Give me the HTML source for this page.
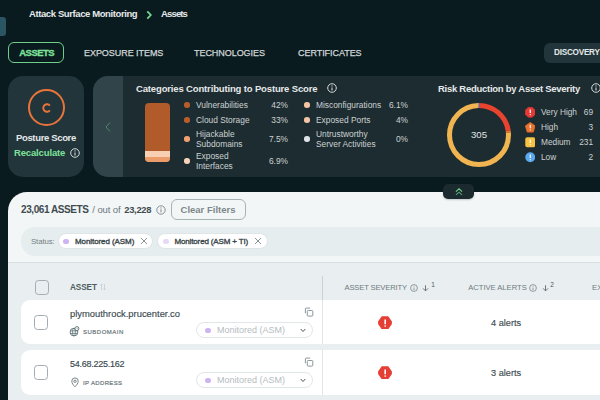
<!DOCTYPE html>
<html><head><meta charset="utf-8">
<style>
*{margin:0;padding:0;box-sizing:border-box}
html,body{width:600px;height:400px;overflow:hidden;background:#0a1b1f;font-family:"Liberation Sans",sans-serif;position:relative}
.a{position:absolute;white-space:nowrap}
.w{color:#e6e9ea}
.b{font-weight:bold}
.lg{font-size:8.4px;line-height:9.2px;color:#ccd2d3}
.dot{position:absolute;width:5.5px;height:5.5px;border-radius:50%}
.pct{position:absolute;text-align:right;font-size:8.4px;line-height:9px;color:#ccd2d3}
.th{font-size:7.6px;line-height:9px;color:#6e7a7d;letter-spacing:0.2px}
</style></head><body>
<!-- left teal tab -->
<div class="a" style="left:-6px;top:17px;width:12px;height:19px;background:#2a5563;border-radius:3px"></div>
<!-- breadcrumb -->
<div class="a b w" style="left:29px;top:8px;font-size:9.5px;line-height:12px;letter-spacing:-0.4px">Attack Surface Monitoring</div>
<svg class="a" style="left:145px;top:9.5px" width="8" height="10" viewBox="0 0 8 10"><path d="M2.3 1.3 L5.8 5 L2.3 8.7" fill="none" stroke="#74dc92" stroke-width="1.7"/></svg>
<div class="a b w" style="left:161px;top:8px;font-size:9.5px;line-height:12px;letter-spacing:-0.85px">Assets</div>

<!-- tabs -->
<div class="a" style="left:8px;top:42.2px;width:56px;height:20.6px;border:1.5px solid #6fcf8a;border-radius:6px"></div>
<div class="a b" style="left:19.3px;top:47px;font-size:9.5px;line-height:12px;color:#7ee29a;letter-spacing:-0.55px;-webkit-text-stroke:0.3px #7ee29a">ASSETS</div>
<div class="a" style="left:84px;top:47px;font-size:9px;line-height:12px;color:#d0d6d7;letter-spacing:-0.05px;-webkit-text-stroke:0.25px #d0d6d7">EXPOSURE ITEMS</div>
<div class="a" style="left:194px;top:47px;font-size:9px;line-height:12px;color:#d0d6d7;letter-spacing:-0.05px;-webkit-text-stroke:0.25px #d0d6d7">TECHNOLOGIES</div>
<div class="a" style="left:298px;top:47px;font-size:9px;line-height:12px;color:#d0d6d7;letter-spacing:-0.05px;-webkit-text-stroke:0.25px #d0d6d7">CERTIFICATES</div>
<div class="a" style="left:544px;top:43px;width:80px;height:20px;background:#22353a;border-radius:6px"></div>
<div class="a b w" style="left:554px;top:47.2px;font-size:8.2px;line-height:12px;letter-spacing:-0.25px">DISCOVERY</div>

<!-- posture card -->
<div class="a" style="left:8px;top:76px;width:76px;height:101px;background:#22353a;border-radius:15px"></div>
<div class="a" style="left:28px;top:89px;width:37px;height:37px;border:2.2px solid #e8743a;border-radius:50%"></div>
<svg class="a" style="left:40.5px;top:102.45px" width="12" height="12" viewBox="0 0 12 12"><path d="M8.87 3.59 A3.75 3.75 0 1 0 8.87 8.41" fill="none" stroke="#e8743a" stroke-width="1.9"/></svg>
<div class="a b w" style="left:16px;top:132px;font-size:9.5px;line-height:12px;letter-spacing:-0.35px">Posture Score</div>
<div class="a b" style="left:14px;top:147px;font-size:9.5px;line-height:12px;color:#7ee29a;letter-spacing:-0.15px">Recalculate</div>
<svg class="a" style="left:70px;top:148px" width="10" height="10" viewBox="0 0 10 10"><circle cx="5" cy="5" r="4.3" fill="none" stroke="#d3d9da" stroke-width="1"/><path d="M5 4.4 V7.4" stroke="#d3d9da" stroke-width="1.1"/><circle cx="5" cy="2.9" r="0.65" fill="#d3d9da"/></svg>

<!-- categories card -->
<div class="a" style="left:93px;top:76px;width:560px;height:101px;background:#1d2c30;border-radius:15px;overflow:hidden">
  <div class="a" style="left:0;top:0;width:30px;height:101px;background:#30444a"></div>
</div>
<svg class="a" style="left:104px;top:121px" width="8" height="12" viewBox="0 0 8 12"><path d="M6 1.5 L2 6 L6 10.5" fill="none" stroke="#4f8a68" stroke-width="1"/></svg>
<div class="a b w" style="left:136px;top:82.8px;font-size:9.5px;line-height:12px;letter-spacing:-0.15px">Categories Contributing to Posture Score</div>
<svg class="a" style="left:327.2px;top:82.6px" width="10" height="10" viewBox="0 0 10 10"><circle cx="5" cy="5" r="4.3" fill="none" stroke="#d3d9da" stroke-width="1"/><path d="M5 4.4 V7.4" stroke="#d3d9da" stroke-width="1.1"/><circle cx="5" cy="2.9" r="0.65" fill="#d3d9da"/></svg>

<!-- bar -->
<div class="a" style="left:145px;top:103px;width:25px;height:59px;border-radius:4px;overflow:hidden;background:#b15a2a">
  <div class="a" style="left:0;top:48px;width:25px;height:6px;background:#f8cfb3"></div>
  <div class="a" style="left:0;top:54px;width:25px;height:5px;background:#ec9c6a"></div>
</div>

<!-- legend col 1 -->
<div class="dot" style="left:184px;top:102px;background:#b85c2c"></div>
<div class="a lg" style="left:196px;top:100.8px">Vulnerabilities</div>
<div class="pct" style="left:257px;width:31px;top:100.8px">42%</div>
<div class="dot" style="left:184px;top:117px;background:#b85c2c"></div>
<div class="a lg" style="left:196px;top:116.3px">Cloud Storage</div>
<div class="pct" style="left:257px;width:31px;top:116.3px">33%</div>
<div class="dot" style="left:184px;top:136px;background:#f0a070"></div>
<div class="a lg" style="left:196px;top:130.3px">Hijackable<br>Subdomains</div>
<div class="pct" style="left:257px;width:31px;top:135.3px">7.5%</div>
<div class="dot" style="left:184px;top:158px;background:#f8d2b8"></div>
<div class="a lg" style="left:196px;top:152.3px">Exposed<br>Interfaces</div>
<div class="pct" style="left:257px;width:31px;top:157.3px">6.9%</div>

<!-- legend col 2 -->
<div class="dot" style="left:304px;top:102px;background:#f5c4a4"></div>
<div class="a lg" style="left:316px;top:100.8px">Misconfigurations</div>
<div class="pct" style="left:377px;width:31px;top:100.8px">6.1%</div>
<div class="dot" style="left:304px;top:117px;background:#f5c4a4"></div>
<div class="a lg" style="left:316px;top:116.3px">Exposed Ports</div>
<div class="pct" style="left:377px;width:31px;top:116.3px">4%</div>
<div class="dot" style="left:304px;top:136px;background:#dde3e6"></div>
<div class="a lg" style="left:316px;top:130.3px">Untrustworthy<br>Server Activities</div>
<div class="pct" style="left:377px;width:31px;top:135.3px">0%</div>

<!-- risk -->
<div class="a b w" style="left:438px;top:83px;font-size:9.5px;line-height:12px;letter-spacing:-0.27px">Risk Reduction by Asset Severity</div>
<svg class="a" style="left:590.8px;top:82.6px" width="10" height="10" viewBox="0 0 10 10"><circle cx="5" cy="5" r="4.3" fill="none" stroke="#d3d9da" stroke-width="1"/><path d="M5 4.4 V7.4" stroke="#d3d9da" stroke-width="1.1"/><circle cx="5" cy="2.9" r="0.65" fill="#d3d9da"/></svg>
<svg class="a" style="left:446px;top:102px" width="66" height="66" viewBox="0 0 66 66" id="donut"><circle cx="33" cy="33" r="29.5" fill="none" stroke="#e8432e" stroke-width="5" stroke-dasharray="41.933 143.421" stroke-dashoffset="0.000" transform="rotate(-90 33 33)"/><circle cx="33" cy="33" r="29.5" fill="none" stroke="#e8722e" stroke-width="5" stroke-dasharray="1.823 183.531" stroke-dashoffset="-41.933" transform="rotate(-90 33 33)"/><circle cx="33" cy="33" r="29.5" fill="none" stroke="#f0b450" stroke-width="5" stroke-dasharray="140.383 44.971" stroke-dashoffset="-43.756" transform="rotate(-90 33 33)"/><circle cx="33" cy="33" r="29.5" fill="none" stroke="#5aa8e6" stroke-width="5" stroke-dasharray="1.215 184.139" stroke-dashoffset="-184.139" transform="rotate(-90 33 33)"/></svg>
<div class="a" style="left:446px;top:129px;width:66px;text-align:center;font-size:9.6px;line-height:12px;color:#e0e4e5">305</div>


<svg class="a" style="left:524.5px;top:107.25px" width="10.5" height="10.5" viewBox="0 0 11 11"><path d="M3.4 0.3 H7.6 L10.7 3.4 V7.6 L7.6 10.7 H3.4 L0.3 7.6 V3.4 Z" fill="#e53935" stroke="#e53935" stroke-width="0.6" stroke-linejoin="round"/><path d="M5.5 2.6 V6.2" stroke="#fff" stroke-width="1.3"/><circle cx="5.5" cy="8" r="0.7" fill="#fff"/></svg>
<svg class="a" style="left:524.5px;top:122.25px" width="10.5" height="10.5" viewBox="0 0 11 11"><path d="M5.5 0.4 L10.6 4.1 L8.7 10.6 H2.3 L0.4 4.1 Z" fill="#e8722e" stroke="#e8722e" stroke-width="0.8" stroke-linejoin="round"/><path d="M5.5 3 V6.5" stroke="#fff" stroke-width="1.2"/><circle cx="5.5" cy="8.2" r="0.65" fill="#fff"/></svg>
<svg class="a" style="left:524.5px;top:137.25px" width="10.5" height="10.5" viewBox="0 0 11 11"><rect x="0.3" y="0.3" width="10.4" height="10.4" rx="2" fill="#f5c242"/><path d="M5.5 2.6 V6.2" stroke="#fff" stroke-width="1.2"/><circle cx="5.5" cy="8" r="0.65" fill="#fff"/></svg>
<svg class="a" style="left:524.5px;top:152.25px" width="10.5" height="10.5" viewBox="0 0 11 11"><circle cx="5.5" cy="5.5" r="5.2" fill="#5aa9ef"/><path d="M5.5 2.6 V6.2" stroke="#fff" stroke-width="1.2"/><circle cx="5.5" cy="8" r="0.65" fill="#fff"/></svg>
<div class="a lg" style="left:541px;top:108.3px;font-size:8.3px">Very High</div>
<div class="pct" style="left:563px;width:30px;top:108.3px;font-size:8.3px">69</div>
<div class="a lg" style="left:541px;top:123.3px;font-size:8.3px">High</div>
<div class="pct" style="left:563px;width:30px;top:123.3px;font-size:8.3px">3</div>
<div class="a lg" style="left:541px;top:138.3px;font-size:8.3px">Medium</div>
<div class="pct" style="left:563px;width:30px;top:138.3px;font-size:8.3px">231</div>
<div class="a lg" style="left:541px;top:153.3px;font-size:8.3px">Low</div>
<div class="pct" style="left:563px;width:30px;top:153.3px;font-size:8.3px">2</div>


<!-- collapse -->
<!-- white panel -->
<div class="a" style="left:8px;top:191.5px;width:620px;height:240px;background:#f3f6f7;border-radius:19px 13px 13px 13px;overflow:hidden">
  <div class="a" style="left:0;top:70px;width:620px;height:1px;background:#d5dee1"></div>
  <div class="a" style="left:0;top:71.5px;width:620px;height:200px;background:#e9eff1"></div>
</div>
<div class="a" style="left:443px;top:183.5px;width:31px;height:15px;background:#1b2a2e;border-radius:5px;box-shadow:0 1px 2px rgba(0,0,0,0.2)"></div>
<svg class="a" style="left:454.5px;top:188px" width="8" height="8" viewBox="0 0 8 8"><path d="M0.9 3.6 L4 0.8 L7.1 3.6" fill="none" stroke="#6fd08e" stroke-width="1.05"/><path d="M0.9 6.9 L4 4.1 L7.1 6.9" fill="none" stroke="#5a9f74" stroke-width="1.05"/></svg>

<!-- summary -->
<div class="a b" style="left:21px;top:203.5px;font-size:10px;line-height:12px;color:#3f4b4f;letter-spacing:-0.42px">23,061 ASSETS</div>
<div class="a" style="left:92.3px;top:203.5px;font-size:9.5px;line-height:12px;color:#6b777a;letter-spacing:-0.1px">/ out of</div>
<div class="a b" style="left:124.3px;top:203.5px;font-size:9.4px;line-height:12px;color:#3f4b4f;letter-spacing:-0.3px">23,228</div>
<svg class="a" style="left:155.5px;top:204.5px" width="10" height="10" viewBox="0 0 10 10"><circle cx="5" cy="5" r="4.2" fill="none" stroke="#7b8689" stroke-width="0.9"/><path d="M5 4.3 V7.3" stroke="#7b8689" stroke-width="1"/><circle cx="5" cy="2.9" r="0.6" fill="#7b8689"/></svg>
<div class="a" style="left:170.5px;top:199px;width:75px;height:21px;border:1px solid #a9b2b5;border-radius:6px"></div>
<div class="a b" style="left:170.5px;top:203.5px;width:75px;text-align:center;font-size:9.5px;line-height:12px;color:#7d888b">Clear Filters</div>

<!-- status -->
<div class="a" style="left:21px;top:227px;width:620px;height:28.5px;background:#e6edef;border-radius:14px"></div>
<div class="a" style="left:31px;top:236.6px;font-size:7.8px;line-height:10px;color:#737e81;letter-spacing:-0.1px">Status:</div>
<div class="a" style="left:57.5px;top:233.2px;width:95.5px;height:16px;background:#fff;border:1px solid #dfe5e7;border-radius:8px"></div>
<div class="dot" style="left:63px;top:238.5px;background:#cdb3f2"></div>
<div class="a" style="left:75px;top:236.6px;font-size:8px;line-height:10px;color:#3b464a;letter-spacing:-0.08px;-webkit-text-stroke:0.35px #3b464a">Monitored (ASM)</div>
<svg class="a" style="left:140px;top:237px" width="8" height="8" viewBox="0 0 8 8"><path d="M1 1 L7 7 M7 1 L1 7" stroke="#7d888b" stroke-width="0.9"/></svg>
<div class="a" style="left:156.8px;top:233.2px;width:111.5px;height:16px;background:#fff;border:1px solid #dfe5e7;border-radius:8px"></div>
<div class="dot" style="left:163px;top:238.5px;background:#e6d9f6"></div>
<div class="a" style="left:174.5px;top:236.6px;font-size:8px;line-height:10px;color:#3b464a;letter-spacing:-0.15px;-webkit-text-stroke:0.35px #3b464a">Monitored (ASM + TI)</div>
<svg class="a" style="left:254px;top:237px" width="8" height="8" viewBox="0 0 8 8"><path d="M1 1 L7 7 M7 1 L1 7" stroke="#7d888b" stroke-width="0.9"/></svg>

<!-- table header -->
<div class="a" style="left:34.5px;top:280px;width:14px;height:14.5px;border:1px solid #a3acaf;border-radius:3.5px"></div>
<div class="a b th" style="left:70px;top:282.8px;font-size:8.2px;color:#505c60;letter-spacing:-0.1px">ASSET</div>
<svg class="a" style="left:100px;top:283px" width="6" height="8" viewBox="0 0 6 8"><path d="M1.5 7 V1 M0.3 2.2 L1.5 1 L2.7 2.2 M4.5 1 V7 M3.3 5.8 L4.5 7 L5.7 5.8" fill="none" stroke="#c5cdd0" stroke-width="0.8"/></svg>
<div class="a" style="left:321.5px;top:276px;width:1.2px;height:23.5px;background:#c9d1d4"></div>
<div class="a th" style="left:344.5px;top:283.3px;letter-spacing:-0.15px">ASSET SEVERITY</div>
<svg class="a" style="left:410px;top:283.6px" width="8" height="8" viewBox="0 0 8 8"><circle cx="4" cy="4" r="3.4" fill="none" stroke="#778386" stroke-width="0.8"/><path d="M4 3.5 V6" stroke="#778386" stroke-width="0.8"/><circle cx="4" cy="2.3" r="0.45" fill="#778386"/></svg>
<svg class="a" style="left:422px;top:284.5px" width="7" height="6.5" viewBox="0 0 7 6.5"><path d="M3.5 0.3 V5.8 M1 3.4 L3.5 5.9 L6 3.4" fill="none" stroke="#5d6a6d" stroke-width="0.9"/></svg>
<div class="a" style="left:431.3px;top:281.3px;font-size:6.5px;line-height:8px;color:#4a5659">1</div>
<div class="a th" style="left:468.2px;top:283.3px;letter-spacing:0px">ACTIVE ALERTS</div>
<svg class="a" style="left:529px;top:283.6px" width="8" height="8" viewBox="0 0 8 8"><circle cx="4" cy="4" r="3.4" fill="none" stroke="#778386" stroke-width="0.8"/><path d="M4 3.5 V6" stroke="#778386" stroke-width="0.8"/><circle cx="4" cy="2.3" r="0.45" fill="#778386"/></svg>
<svg class="a" style="left:541.5px;top:284.5px" width="7" height="6.5" viewBox="0 0 7 6.5"><path d="M3.5 0.3 V5.8 M1 3.4 L3.5 5.9 L6 3.4" fill="none" stroke="#5d6a6d" stroke-width="0.9"/></svg>
<div class="a" style="left:550.2px;top:281.3px;font-size:6.5px;line-height:8px;color:#4a5659">2</div>
<div class="a th" style="left:592px;top:283.3px">EX</div>

<!-- rows -->
<div class="a" style="left:21px;top:300px;width:620px;height:44px;background:#fff;border-radius:9px"></div>
<div class="a" style="left:21px;top:350px;width:620px;height:44.5px;background:#fff;border-radius:9px"></div>
<div class="a" style="left:321.5px;top:300px;width:1.2px;height:44px;background:#e0e5e7"></div>
<div class="a" style="left:321.5px;top:350px;width:1.2px;height:44.5px;background:#e0e5e7"></div>
<div class="a" style="left:33.5px;top:315px;width:14.5px;height:14.5px;border:1px solid #a3acaf;border-radius:3.5px"></div>
<div class="a" style="left:33.5px;top:365px;width:14.5px;height:14.5px;border:1px solid #a3acaf;border-radius:3.5px"></div>

<div class="a" style="left:70px;top:307.5px;font-size:9.4px;line-height:12px;color:#3a4a50;-webkit-text-stroke:0.15px #3a4a50">plymouthrock.prucenter.co</div>
<div class="a" style="left:83px;top:328.3px;font-size:6px;line-height:8px;color:#6b777a;letter-spacing:0.5px;-webkit-text-stroke:0.2px #6b777a">SUBDOMAIN</div>
<div class="a" style="left:70px;top:357.8px;font-size:9px;line-height:12px;color:#3a4a50;-webkit-text-stroke:0.15px #3a4a50;letter-spacing:-0.26px">54.68.225.162</div>
<div class="a" style="left:83px;top:378.5px;font-size:6px;line-height:8px;color:#6b777a;letter-spacing:0.35px;-webkit-text-stroke:0.2px #6b777a">IP ADDRESS</div>

<div class="a" style="left:196px;top:322px;width:116.5px;height:16px;border:1px solid #e1e6e8;border-radius:8px"></div>
<div class="dot" style="left:205px;top:327.5px;background:#cdb3f2"></div>
<div class="a" style="left:217px;top:325px;font-size:9px;line-height:10px;color:#b5bdc0">Monitored (ASM)</div>
<div class="a" style="left:196px;top:372px;width:116.5px;height:16px;border:1px solid #e1e6e8;border-radius:8px"></div>
<div class="dot" style="left:205px;top:377.5px;background:#cdb3f2"></div>
<div class="a" style="left:217px;top:375px;font-size:9px;line-height:10px;color:#b5bdc0">Monitored (ASM)</div>

<div class="a" style="left:491px;top:317px;font-size:9.2px;line-height:12px;color:#3d4b50;-webkit-text-stroke:0.15px #3d4b50">4 alerts</div>
<div class="a" style="left:491px;top:367.4px;font-size:9.2px;line-height:12px;color:#3d4b50;-webkit-text-stroke:0.15px #3d4b50">3 alerts</div>


<!-- row icons -->
<svg class="a" style="left:69px;top:326px" width="11" height="11" viewBox="0 0 11 11"><circle cx="4.95" cy="6.1" r="3.85" fill="none" stroke="#4f656a" stroke-width="0.85"/><ellipse cx="4.95" cy="6.1" rx="1.4" ry="3.85" fill="none" stroke="#4f656a" stroke-width="0.7"/><path d="M1.3 4.9 H8.6 M1.3 7.4 H8.6" stroke="#4f656a" stroke-width="0.7"/><circle cx="7.9" cy="2.6" r="2" fill="#fff" stroke="#4f656a" stroke-width="0.85"/><path d="M7.9 1.8 V2.7 H8.6" fill="none" stroke="#4f656a" stroke-width="0.5"/></svg>
<svg class="a" style="left:70.5px;top:376.8px" width="8" height="10.5" viewBox="0 0 8 10.5"><path d="M4 9.8 C2.2 7.9 0.8 6.3 0.8 4.1 A3.2 3.2 0 0 1 7.2 4.1 C7.2 6.3 5.8 7.9 4 9.8 Z" fill="none" stroke="#6e7a7d" stroke-width="0.9"/><circle cx="4" cy="4.3" r="1.2" fill="none" stroke="#6e7a7d" stroke-width="0.9"/></svg>
<svg class="a" style="left:304px;top:306.5px" width="10" height="10" viewBox="0 0 10 10"><path d="M1.4 6.3 V1.9 Q1.4 1.1 2.2 1.1 H6.2" fill="none" stroke="#7f8b8e" stroke-width="0.9"/><rect x="3.3" y="3.5" width="5.5" height="5.6" rx="0.9" fill="none" stroke="#7f8b8e" stroke-width="0.9"/></svg>
<svg class="a" style="left:304px;top:356.5px" width="10" height="10" viewBox="0 0 10 10"><path d="M1.4 6.3 V1.9 Q1.4 1.1 2.2 1.1 H6.2" fill="none" stroke="#7f8b8e" stroke-width="0.9"/><rect x="3.3" y="3.5" width="5.5" height="5.6" rx="0.9" fill="none" stroke="#7f8b8e" stroke-width="0.9"/></svg>
<svg class="a" style="left:299.5px;top:327.5px" width="6" height="5" viewBox="0 0 6 5"><path d="M0.7 1 L3 3.5 L5.3 1" fill="none" stroke="#4a5659" stroke-width="1"/></svg>
<svg class="a" style="left:299.5px;top:377.5px" width="6" height="5" viewBox="0 0 6 5"><path d="M0.7 1 L3 3.5 L5.3 1" fill="none" stroke="#4a5659" stroke-width="1"/></svg>
<svg class="a" style="left:377.5px;top:315.5px" width="14" height="13.5" viewBox="0 0 14 13.5"><path d="M4 0.9 H10 L13.3 5.6 V7.9 L10 12.6 H4 L0.7 7.9 V5.6 Z" fill="#e53f35" stroke="#e53f35" stroke-width="1.1" stroke-linejoin="round"/><path d="M7.2 3.4 V8.3" stroke="#fff" stroke-width="1.6"/><circle cx="7.2" cy="10" r="0.85" fill="#fff"/></svg>
<svg class="a" style="left:377.5px;top:365.5px" width="14" height="13.5" viewBox="0 0 14 13.5"><path d="M4 0.9 H10 L13.3 5.6 V7.9 L10 12.6 H4 L0.7 7.9 V5.6 Z" fill="#e53f35" stroke="#e53f35" stroke-width="1.1" stroke-linejoin="round"/><path d="M7.2 3.4 V8.3" stroke="#fff" stroke-width="1.6"/><circle cx="7.2" cy="10" r="0.85" fill="#fff"/></svg>
</body></html>
